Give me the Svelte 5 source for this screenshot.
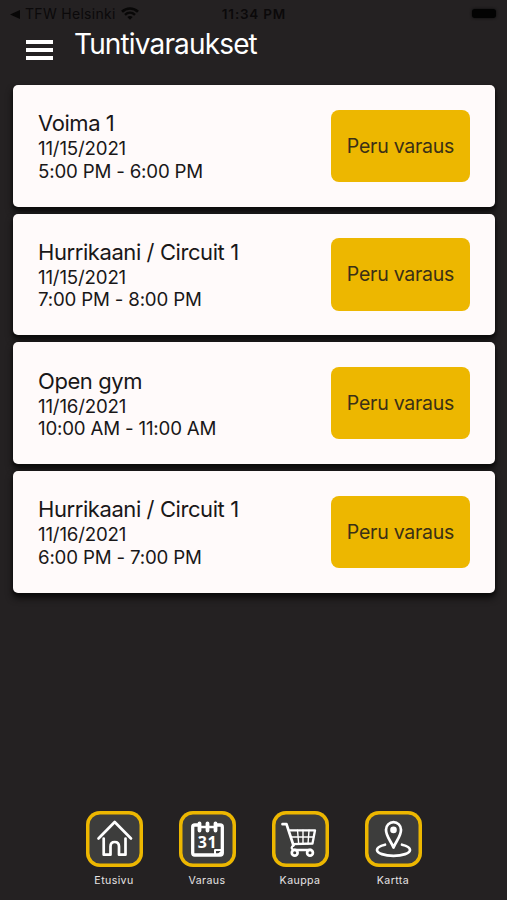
<script>
  const bookings = [
    { name: 'Voima 1', date: '11/15/2021', time: '5:00 PM - 6:00 PM' },
    { name: 'Hurrikaani / Circuit 1', date: '11/15/2021', time: '7:00 PM - 8:00 PM' },
    { name: 'Open gym', date: '11/16/2021', time: '10:00 AM - 11:00 AM' },
    { name: 'Hurrikaani / Circuit 1', date: '11/16/2021', time: '6:00 PM - 7:00 PM' }
  ];
  const tabs = [
    { id: 'home', label: 'Etusivu' },
    { id: 'calendar', label: 'Varaus' },
    { id: 'cart', label: 'Kauppa' },
    { id: 'map', label: 'Kartta' }
  ];
</script>

<div class="app">
  <div class="status">
    <div class="back">
      <svg width="10" height="9" viewBox="0 0 10 9"><path d="M0 4.5L10 0V9Z" fill="#080707" /></svg>
      <span class="carrier">TFW Helsinki</span>
      <svg class="wifi" width="18" height="13" viewBox="0 0 18 13" fill="none" stroke="#080707">
        <path d="M1 4.8C5.5 .4 12.5 .4 17 4.8" stroke-width="2.7" />
        <path d="M4 7.9C7 5.1 11 5.1 14 7.9" stroke-width="2.4" />
        <path d="M9 12.7L6.3 10.1Q9 7.9 11.7 10.1Z" fill="#080707" stroke="none" />
      </svg>
    </div>
    <span class="clock">11:34 PM</span>
    <span class="battery"></span>
  </div>

  <header>
    <button class="menu" aria-label="Menu"><i></i><i></i><i></i></button>
    <h1>Tuntivaraukset</h1>
  </header>

  <main>
    {#each bookings as b}
      <article>
        <div class="info">
          <h2>{b.name}</h2>
          <p>{b.date}</p>
          <p>{b.time}</p>
        </div>
        <button class="cancel">Peru varaus</button>
      </article>
    {/each}
  </main>

  <nav>
    {#each tabs as t}
      <div class="tab">
        <div class="tile">
          <svg width="57" height="57" viewBox="0 0 57 57" fill="none" stroke="#fff" stroke-width="2.7" stroke-linecap="round" stroke-linejoin="round">
            {#if t.id === 'home'}
              <path d="M12.5 27.5L28.7 11L45 27.5" />
              <path d="M17.7 27.5V43.7H24.5V35.5Q24.500 31 28.700 31Q33 31 33 35.500V43.700H39.500V27.500" />
            {:else if t.id === 'calendar'}
              <rect x="13.700" y="14" width="29.600" height="30" rx="2" stroke-width="3.300" />
              <path d="M19.500 14H37.500" stroke="#3d3d3c" stroke-width="4" stroke-linecap="butt" />
              <path d="M20.500 12.300V19.500M28.500 12.300V19.500M36.500 12.300V19.500" stroke-width="3.800" />
              <path d="M21 16H36" stroke-width="2.600" />
              <path d="M36 44V39H42.500" stroke-width="2" />
              <path d="M37.500 44L42.500 39.500V44Z" fill="#fff" stroke="none" />
              <text x="28.400" y="36.500" text-anchor="middle" fill="#fff" stroke="none">31</text>
            {:else if t.id === 'cart'}
              <path d="M10.500 13.200H14.500L21.500 34.500" />
              <path d="M18 19.300H43L40.500 32.500L21 33.200" stroke-width="2.300" />
              <path d="M19.500 26H41.500M25.500 19.300L26.700 33M31 19.300V33M37 19.300L36 33" stroke-width="1.400" />
              <path d="M21.500 34Q17.500 37.500 22 39H39" stroke-width="2.300" />
              <circle cx="22.700" cy="41.800" r="2.900" fill="#3d3d3c" />
              <circle cx="38" cy="41.800" r="2.900" fill="#3d3d3c" />
            {:else}
              <path d="M28.500 36.500C26 30 21 25.500 21 18.700A7.500 7.500 0 0 1 36 18.700C36 25.500 31 30 28.500 36.500Z" />
              <circle cx="28.500" cy="18.900" r="3.300" fill="#fff" stroke="none" />
              <path d="M20 33.700C15.500 34.700 12 36.200 12 39C12 42.300 19.500 44.800 28.500 44.800S45 42.300 45 39C45 36.200 41.500 34.700 37 33.700" />
            {/if}
          </svg>
        </div>
        <span>{t.label}</span>
      </div>
    {/each}
  </nav>
</div>

<style>
  :global(body) { background: #242122; }
  .app {
    box-sizing: border-box;
    width: 507px;
    height: 900px;
    background: #242122;
    display: flex;
    flex-direction: column;
    font-family: Inter, "Liberation Sans", sans-serif;
    overflow: hidden;
  }
  .status {
    height: 28px;
    flex: none;
    display: grid;
    grid-template-columns: 1fr auto 1fr;
    align-items: center;
    padding: 0 11px 0 10px;
    color: #0b090a;
    font-size: 14px;
    line-height: 28px;
  }
  .back { display: flex; align-items: center; }
  .carrier { width: 90px; margin-left: 5px; letter-spacing: .3px; white-space: nowrap; }
  .wifi { margin-left: 6px; margin-top: -2px; }
  .clock { font-weight: 600; letter-spacing: .8px; margin-left: 2px; font-size: 13.5px; }
  .battery { justify-self: end; width: 24px; height: 9px; margin-top: -2px; border-radius: 3px; background: #030303; box-shadow: 0 0 3px #0a0909; }
  header { height: 57px; flex: none; display: flex; align-items: flex-start; padding-left: 26px; }
  .menu { width: 27px; height: 20px; margin: 12px 0 0; padding: 0; border: 0; background: none; display: flex; flex-direction: column; justify-content: space-between; }
  .menu i { display: block; width: 27px; height: 4px; background: #fff; }
  h1 { margin: 0 0 0 21px; color: #fff; font-size: 28px; line-height: 32px; font-weight: 400; letter-spacing: -.85px; }
  main { display: flex; flex-direction: column; gap: 7.2px; padding: 0 12px 0 13px; flex: none; }
  article {
    box-sizing: border-box;
    height: 121.5px;
    border-radius: 5px;
    background: #fffafa;
    display: flex;
    justify-content: space-between;
    align-items: center;
    padding: 0 25px;
    box-shadow: 0 5px 7px #0d0c0c, 0 2px 3px #0d0c0c;
  }
  .info { color: #191718; white-space: nowrap; padding-top: 2px; }
  h2 { margin: 0; padding-bottom: 2px; font-size: 22px; line-height: 26px; font-weight: 400; letter-spacing: -.42px; }
  p { margin: 0; font-size: 18.7px; line-height: 22.5px; letter-spacing: -.18px; }
  .cancel { width: 139px; height: 72.5px; padding: 0; border: 0; border-radius: 8px; background: #edb700; color: #3b3016; font: 400 19.5px Inter, sans-serif; letter-spacing: -.25px; white-space: nowrap; }
  nav { margin-top: auto; height: 89.5px; display: flex; justify-content: center; gap: 36px; }
  .tab { width: 57px; display: flex; flex-direction: column; align-items: center; color: #e6e3e4; font-size: 10.6px; line-height: 14px; letter-spacing: .4px; }
  .tile { width: 57px; height: 56.5px; border-radius: 14px; background: #3d3d3c; box-shadow: inset 0 0 0 3.5px #edb700; }
  .tile svg { display: block; }
  .tile text { font: 700 16px "Noto Sans", sans-serif; }
  .tab span { margin-top: 7px; }
</style>
